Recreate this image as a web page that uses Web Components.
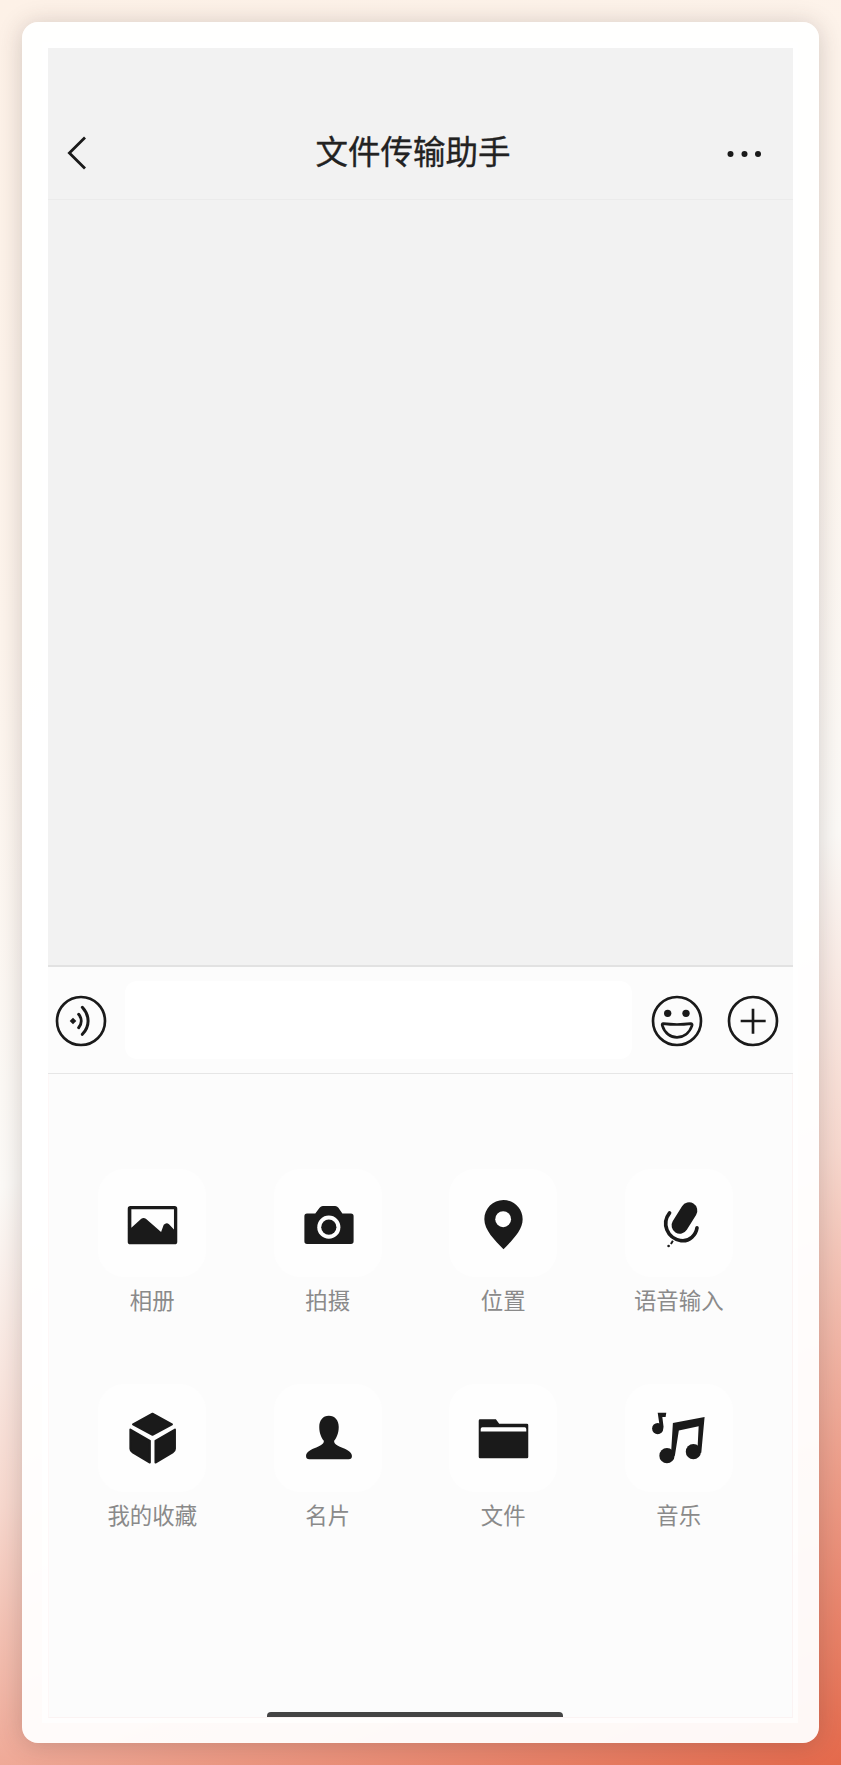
<!DOCTYPE html>
<html lang="zh"><head><meta charset="utf-8"><title>文件传输助手</title>
<style>
html,body{margin:0;padding:0}
body{width:841px;height:1765px;box-sizing:border-box;padding:22px;background:linear-gradient(157deg,#fdf1e7 0%,#fdf4ec 30%,#fcfaf7 56%,#f7d8ce 71%,#efaa98 83%,#e4694b 100%);font-family:"Noto Sans CJK SC","Liberation Sans",sans-serif;overflow:hidden}
</style></head><body>
<wx-device>
  <wx-header>文件传输助手</wx-header>
  <wx-chat></wx-chat>
  <wx-inputbar></wx-inputbar>
  <wx-panel>
    <wx-tile icon="photo">相册</wx-tile>
    <wx-tile icon="camera">拍摄</wx-tile>
    <wx-tile icon="pin">位置</wx-tile>
    <wx-tile icon="mic">语音输入</wx-tile>
    <wx-tile icon="cube">我的收藏</wx-tile>
    <wx-tile icon="person">名片</wx-tile>
    <wx-tile icon="folder">文件</wx-tile>
    <wx-tile icon="music">音乐</wx-tile>
  </wx-panel>
</wx-device>
<script>
const ICONS={
photo:['55 55 327 327','<path fill-rule="evenodd" d="M153 167H287a8 8 0 0 1 8 8V275a8 8 0 0 1-8 8H153a8 8 0 0 1-8-8V175a8 8 0 0 1 8-8ZM156 177V233L186 206Q193 200 200 206L246 246L254 224Q262 216 270 222L285 238V177Z"/>'],
camera:['580 55 327 327','<path d="M680 190H705L718 172Q722 167 728 167H765Q771 167 775 172L787 190H813a8 8 0 0 1 8 8V274a8 8 0 0 1-8 8H680a8 8 0 0 1-8-8V198a8 8 0 0 1 8-8Z"/><circle cx="746" cy="231" r="35" fill="#fff"/><circle cx="746" cy="231" r="23"/>'],
pin:['58 55 327 327','<path d="M223 149C255 149 281 175 281 207C281 240 250 270 223 298C196 270 165 240 165 207C165 175 191 149 223 149Z"/><circle cx="222" cy="207" r="24" fill="#fff"/>'],
mic:['585 55 327 327','<path d="M779 181L751 226" stroke="#1a1a1a" stroke-width="50" stroke-linecap="round" fill="none"/><path d="M720 188C695 220 712 265 755 272C780 275 800 255 803 233" stroke="#1a1a1a" stroke-width="11" stroke-linecap="round" fill="none"/><path d="M730 272L724 282" stroke="#1a1a1a" stroke-width="6" fill="none"/><circle cx="717" cy="288" r="4"/>'],
cube:['55 40 327 327','<g stroke="#1a1a1a" stroke-width="6" stroke-linejoin="round"><path d="M220 130L279 162L220 194L161 162Z"/><path d="M153 178L212 212V278L160 247Q153 243 153 236Z"/><path d="M288 178L229 212V278L281 247Q288 243 288 236Z"/></g>'],
person:['580 40 327 327','<path d="M746 136C765 136 776 150 776 170C776 190 768 205 762 212C762 222 770 226 785 232C800 238 816 245 816 258Q816 268 806 268H687Q677 268 677 258C677 245 692 238 708 232C722 226 731 222 731 212C725 205 717 190 717 170C717 150 728 136 746 136Z"/>'],
folder:['58 40 327 327','<path d="M152 147H200L210 160H294a4 4 0 0 1 4 4V261a4 4 0 0 1-4 4H152a4 4 0 0 1-4-4V151a4 4 0 0 1 4-4Z"/><path fill="#fff" d="M154 184V176Q154 171 159 171H287Q292 171 292 176V184Z"/>'],
music:['585 40 327 327','<circle cx="684" cy="175" r="17"/><path d="M691 175L684 127H710L708 140H698L702 172Z"/><circle cx="712" cy="257" r="23"/><circle cx="792" cy="245" r="23"/><path d="M724 257L730 158L826 140L816 248H804L808 168L748 181L736 257Z"/>']
};
function def(name,html){customElements.define(name,class extends HTMLElement{constructor(){super();this.attachShadow({mode:'open'}).innerHTML=html}})}
def('wx-device',`<style>:host{display:block;box-sizing:border-box;width:797px;height:1721px;background:rgba(255,255,255,.95);border-radius:16px;padding:20px 21px 20px 20px;box-shadow:0 2px 24px rgba(60,45,45,.22)}
.f{height:100%;box-sizing:border-box;padding:6px 5px 5px 6px;background:rgba(255,255,255,.7);display:flex;flex-direction:column}</style><div class="f"><slot></slot></div>`);
def('wx-header',`<style>:host{display:grid;grid-template-columns:1fr auto 1fr;align-items:center;box-sizing:border-box;height:152px;padding:58px 34px 0 19px;background:#f2f2f2;border-bottom:1px solid #ebebeb;flex:none}
.t{font-size:32.5px;font-weight:400;-webkit-text-stroke:.35px #222;color:#222;line-height:44px;padding-bottom:6px}
svg{display:block}.r{justify-self:end;margin:2px -2px 0 0}</style>
<svg width="20" height="36" viewBox="0 0 20 36"><path d="M18 2.5L2.4 18L18 33.5" fill="none" stroke="#1a1a1a" stroke-width="2.8"/></svg>
<div class="t"><slot></slot></div>
<svg class="r" width="34" height="8" viewBox="0 0 34 8"><circle cx="3.5" cy="4" r="3" fill="#1a1a1a"/><circle cx="17.5" cy="4" r="3" fill="#1a1a1a"/><circle cx="31" cy="4" r="3" fill="#1a1a1a"/></svg>`);
def('wx-chat',`<style>:host{display:block;flex:1;background:#f2f2f2;border-bottom:2px solid #e2e2e2}</style>`);
def('wx-inputbar',`<style>:host{display:flex;align-items:center;box-sizing:border-box;height:107px;flex:none;padding:2px 14px 0 7px;background:#fcfcfc;border-bottom:1px solid #e6e6e6}
svg{display:block;flex:none;width:52px;height:52px;fill:none;stroke:#1a1a1a;stroke-width:8}
.i{flex:1;height:78px;margin:-2px 19px 0 18px;background:#fff;border-radius:12px}
.g{margin-right:24px}</style>
<svg viewBox="76 135 156 156"><circle cx="154" cy="213" r="72"/><path d="M147 193C157 205 157 221 147 233M158 172C181 197 181 229 158 253" stroke-linecap="round" stroke-width="9"/><path d="M130 203L140 213L130 223L120 213Z" fill="#1a1a1a" stroke="none"/></svg>
<div class="i"></div>
<svg class="g" viewBox="93 135 156 156"><circle cx="171" cy="213" r="72"/><circle cx="143" cy="190" r="11" fill="#1a1a1a" stroke="none"/><circle cx="198" cy="190" r="11" fill="#1a1a1a" stroke="none"/><path d="M130 221Q171 226 212 221Q218 221 216 227C208 250 190 262 171 262C152 262 134 250 127 227Q125 221 130 221Z"/></svg>
<svg viewBox="322 135 156 156"><circle cx="400" cy="213" r="72"/><path d="M363 213H438M400 176V251"/></svg>`);
def('wx-panel',`<style>:host{display:block;position:relative;box-sizing:border-box;height:644px;flex:none;background:#fcfcfc;border-bottom:1px solid #fbf3f3;border-left:1px solid #fdf7f7;border-right:1px solid #fbf3f3;overflow:hidden}
.g{display:grid;grid-template-columns:repeat(4,175.5px);grid-auto-rows:215px;padding:95px 15.5px 0}
.h{position:absolute;left:218px;bottom:0;width:296px;height:5px;background:#444;border-radius:4px 4px 0 0}</style><div class="g"><slot></slot></div><div class="h"></div>`);
customElements.define('wx-tile',class extends HTMLElement{constructor(){super();const s=this.attachShadow({mode:'open'});const [vb,p]=ICONS[this.getAttribute('icon')];
s.innerHTML=`<style>:host{display:flex;flex-direction:column;align-items:center}
.b{width:108px;height:108px;background:#fefefe;border-radius:26px}
svg{display:block;width:108px;height:108px;fill:#1a1a1a}
.l{margin-top:6px;font-size:22.4px;line-height:32px;color:#8a8a8a}</style>
<div class="b"><svg viewBox="${vb}">${p}</svg></div><div class="l"><slot></slot></div>`}});
</script>
</body></html>
